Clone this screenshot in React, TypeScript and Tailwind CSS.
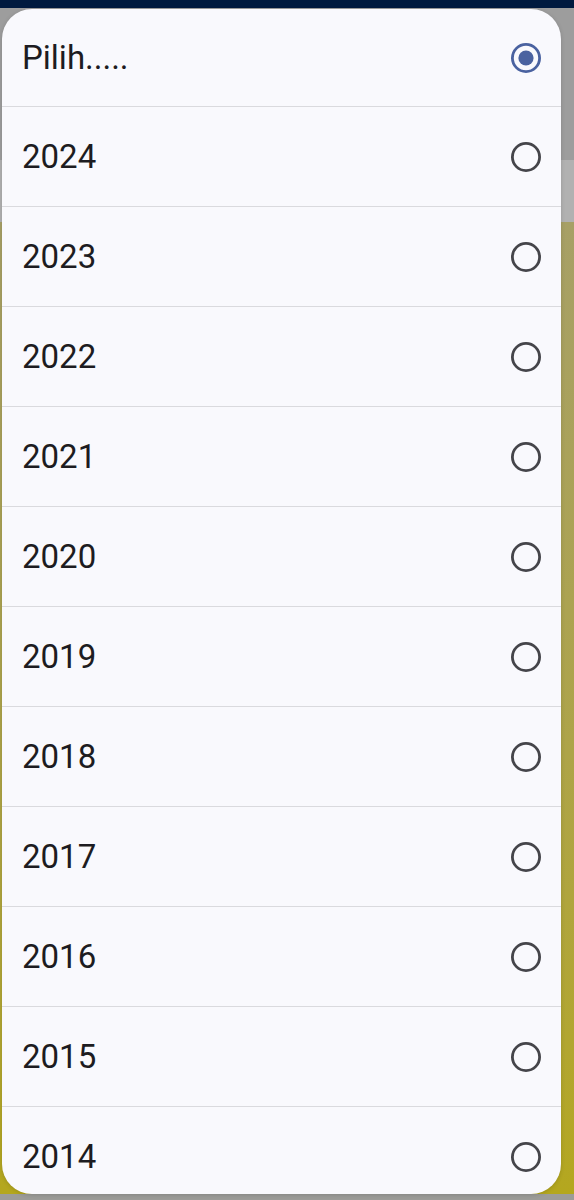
import React from "react";

const years = ["2024", "2023", "2022", "2021", "2020", "2019", "2018", "2017", "2016", "2015", "2014"];

function Radio({ selected }: { selected?: boolean }) {
  return (
    <svg width="34" height="34" viewBox="0 0 34 34" className="shrink-0">
      <circle cx="17" cy="17" r="13.6" fill="none" stroke={selected ? "#4a62a0" : "#45454a"} strokeWidth="2.8" />
      {selected && <circle cx="17" cy="17" r="7.6" fill="#4a62a0" />}
    </svg>
  );
}

export default function App() {
  return (
    <div className="relative w-[574px] h-[1200px] overflow-hidden" style={{ fontFamily: "Roboto, 'Noto Sans', sans-serif" }}>
      <div className="flex flex-col h-full">
        <div className="h-[8px] bg-[#001a3f]" />
        <div className="h-[152px] bg-[#9d9d9d]" />
        <div className="h-[62px] bg-[#b1b1b1]" />
        <div className="flex-1 bg-gradient-to-b from-[#a7a066] to-[#b4a71e]" />
        <div className="h-[6px] bg-[#9c9c98]" />
      </div>
      <div className="absolute left-[2px] top-[9px] w-[559px] h-[1185px] rounded-[30px] overflow-hidden bg-[#f9f9fd] shadow-[0_1px_4px_rgba(0,0,0,0.15)]">
        <div className="h-[97px] flex items-center justify-between pl-[20px] pr-[18px]">
          <span className="text-[33px] text-[#1d1c21] leading-none">Pilih.....</span>
          <Radio selected />
        </div>
        {years.map((y) => (
          <div key={y} className="border-t border-[#dadade] h-[100px] flex items-center justify-between pl-[20px] pr-[18px]">
            <span className="text-[33px] text-[#1d1c21] leading-none">{y}</span>
            <Radio />
          </div>
        ))}
      </div>
    </div>
  );
}
